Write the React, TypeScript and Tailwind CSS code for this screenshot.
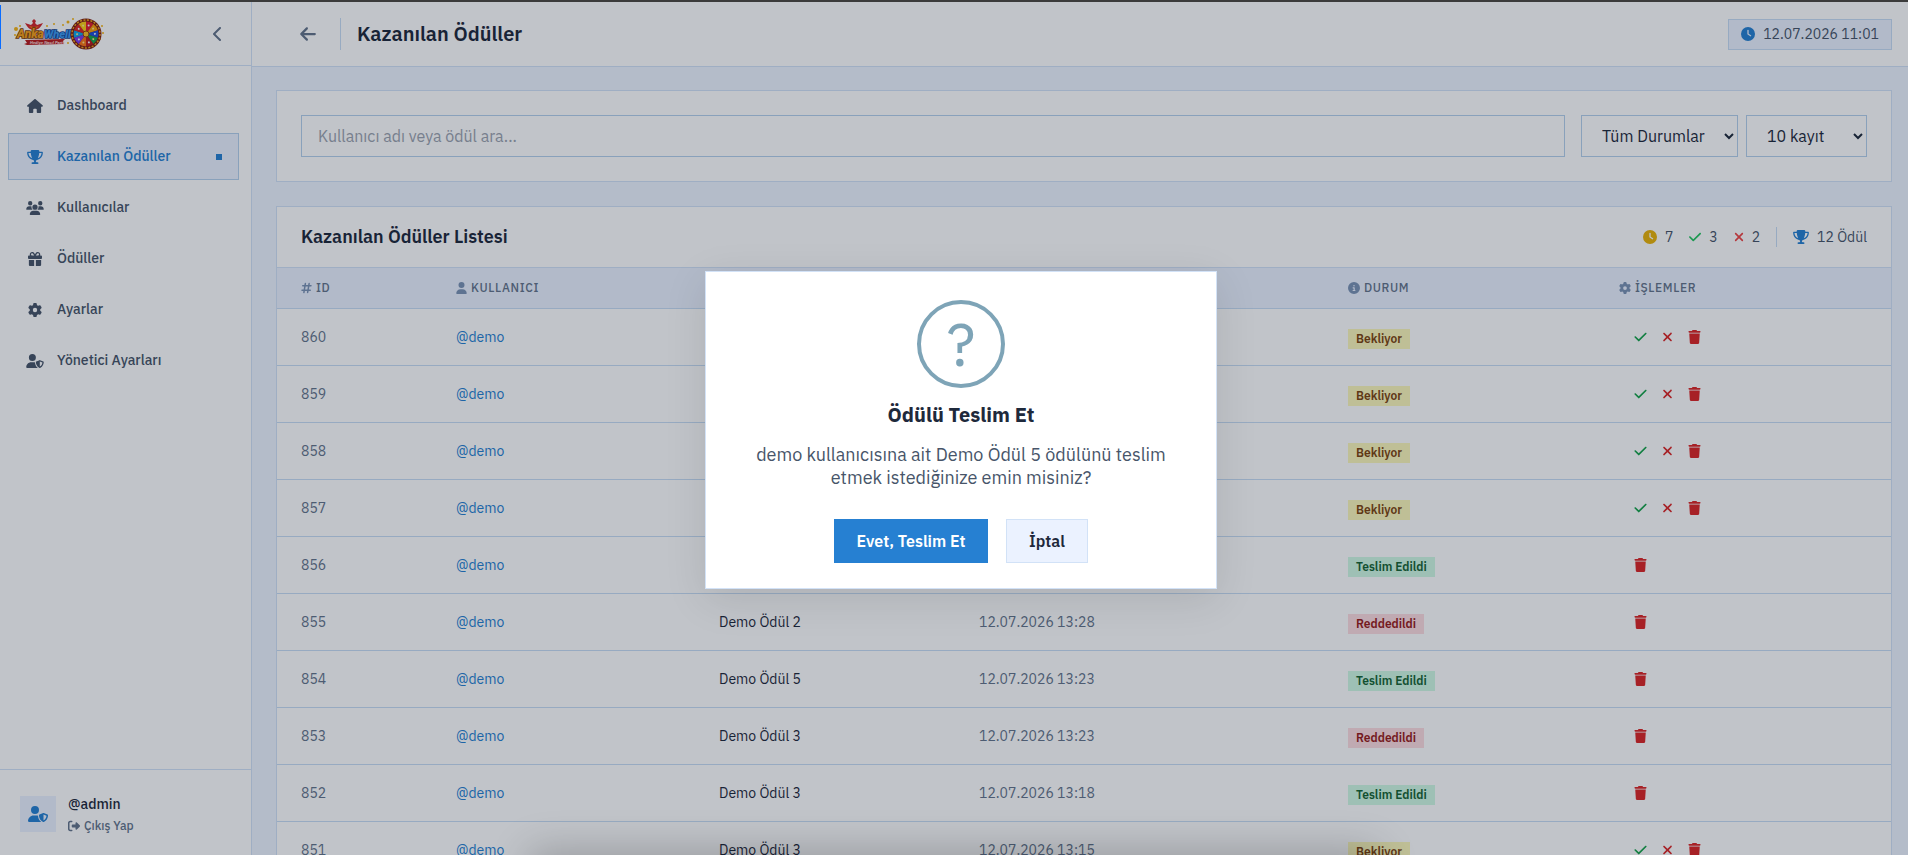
import type { ComponentType } from "react";
import {
    FaArrowLeft,
    FaCalendar,
    FaCheck,
    FaChevronLeft,
    FaCircleInfo,
    FaClock,
    FaGear,
    FaGift,
    FaHashtag,
    FaHouse,
    FaRightFromBracket,
    FaTrash,
    FaTrophy,
    FaUser,
    FaUserShield,
    FaUsers,
    FaXmark,
} from "react-icons/fa6";

type Icon = ComponentType<{ className?: string }>;
type Status = "pending" | "delivered" | "rejected";

const navItems: { label: string; icon: Icon; active?: boolean }[] = [
    { label: "Dashboard", icon: FaHouse },
    { label: "Kazanılan Ödüller", icon: FaTrophy, active: true },
    { label: "Kullanıcılar", icon: FaUsers },
    { label: "Ödüller", icon: FaGift },
    { label: "Ayarlar", icon: FaGear },
    { label: "Yönetici Ayarları", icon: FaUserShield },
];

const columns: { label: string; icon: Icon; iconSize: string; width: string }[] = [
    { label: "ID", icon: FaHashtag, iconSize: "h-3 w-[11px]", width: "w-[155px]" },
    { label: "KULLANICI", icon: FaUser, iconSize: "h-3 w-[11px]", width: "w-[263px]" },
    { label: "ÖDÜL", icon: FaGift, iconSize: "size-3", width: "w-[260px]" },
    { label: "TARİH", icon: FaCalendar, iconSize: "h-3 w-[11px]", width: "w-[369px]" },
    { label: "DURUM", icon: FaCircleInfo, iconSize: "size-3", width: "w-[271px]" },
    { label: "İŞLEMLER", icon: FaGear, iconSize: "size-3", width: "w-[296px]" },
];

const rows: { id: number; prize: string; date: string; status: Status }[] = [
    { id: 860, prize: "Demo Ödül 5", date: "12.07.2026 13:45", status: "pending" },
    { id: 859, prize: "Demo Ödül 1", date: "12.07.2026 13:42", status: "pending" },
    { id: 858, prize: "Demo Ödül 4", date: "12.07.2026 13:38", status: "pending" },
    { id: 857, prize: "Demo Ödül 3", date: "12.07.2026 13:34", status: "pending" },
    { id: 856, prize: "Demo Ödül 5", date: "12.07.2026 13:30", status: "delivered" },
    { id: 855, prize: "Demo Ödül 2", date: "12.07.2026 13:28", status: "rejected" },
    { id: 854, prize: "Demo Ödül 5", date: "12.07.2026 13:23", status: "delivered" },
    { id: 853, prize: "Demo Ödül 3", date: "12.07.2026 13:23", status: "rejected" },
    { id: 852, prize: "Demo Ödül 3", date: "12.07.2026 13:18", status: "delivered" },
    { id: 851, prize: "Demo Ödül 3", date: "12.07.2026 13:15", status: "pending" },
];

const badges: Record<Status, { label: string; style: string }> = {
    pending: { label: "Bekliyor", style: "bg-[#fdf8bb] text-[#7c450f]" },
    delivered: { label: "Teslim Edildi", style: "bg-[#d1fae5] text-[#166534]" },
    rejected: { label: "Reddedildi", style: "bg-[#fedde0] text-[#991b1b]" },
};

const wheelColors = ["#e11d2e", "#f59e0b", "#1d4ed8", "#16a34a", "#b91c1c", "#f97316", "#7c3aed", "#0ea5e9", "#dc2626", "#facc15"];

const Logo = () => (
    <svg viewBox="0 0 92 34" className="h-[34px] w-[92px]" role="img" aria-label="AnkaWhell">
        {/* Phoenix */}
        <path d="M21 13c-4 0-6-2-9-7 2 1 4 1 6 2l2-2-1-2 2-2 2 2-1 2 2 2c2-1 4-1 6-2-3 5-5 7-9 7z" fill="#d3262b" />
        <path d="M20 12c-2-1-3-2-4-3 2 0 3 1 5 1s4-1 5-1c-1 1-2 2-4 3z" fill="#f97316" />
        {/* Confetti */}
        <g fill="#f5b417">
            <circle cx="3" cy="12" r="2" />
            <circle cx="7" cy="9" r="1" />
            <circle cx="2" cy="18" r="1" />
            <circle cx="34" cy="9" r="1" />
            <circle cx="41" cy="7" r="1" />
            <circle cx="50" cy="8" r="1" />
            <circle cx="55" cy="5" r="1.5" />
            <circle cx="60" cy="2" r="1" />
            <circle cx="89" cy="9" r="1" />
            <circle cx="90" cy="16" r="1" />
            <circle cx="87" cy="22" r="1" />
            <circle cx="55" cy="26" r="1" />
        </g>
        <g fontFamily="Roboto, sans-serif" fontWeight="900" fontStyle="italic" strokeWidth="1.5" paintOrder="stroke">
            <text x="4" y="21" fontSize="12" fill="#f5a11a" stroke="#7a3b08">
                Anka
            </text>
            <text x="31" y="21" fontSize="11" fill="#3d9af0" stroke="#12418f">
                Whell
            </text>
        </g>
        {/* Ribbon */}
        <path d="M12 23l40-1-2 2 1 3-37 1-3-1 3-1z" fill="#b91c1c" />
        <text x="17" y="27" fontFamily="'Liberation Sans', sans-serif" fontStyle="italic" fontWeight="700" fontSize="4" fill="#fee2e2">
            Hediye Nasıl Party
        </text>
        {/* Wheel */}
        <circle cx="73" cy="17" r="15.5" fill="#7c1d12" />
        <circle cx="73" cy="17" r="14" fill="none" stroke="#f0a51c" strokeWidth="1.5" strokeDasharray="2 1.5" />
        {wheelColors.map((color, i) => (
            <path key={i} d="M73 17L73 4.5A12.5 12.5 0 0 1 80.35 6.89Z" fill={color} transform={`rotate(${i * 36} 73 17)`} />
        ))}
        {wheelColors.map((_, i) => (
            <circle key={i} cx="75.6" cy="8.5" r="1" fill={i % 2 ? "#fde68a" : "#f8fafc"} transform={`rotate(${i * 36} 73 17)`} />
        ))}
        <circle cx="73" cy="17" r="3" fill="#fbbf24" stroke="#92400e" strokeWidth="1" />
    </svg>
);

const Sidebar = () => (
    <aside className="flex w-[252px] shrink-0 flex-col border-r border-[#d2e2f7] bg-white">
        <div className="flex h-16 items-center justify-between border-b border-[#d2e2f7] pr-7 pl-[13px]">
            <Logo />
            <button type="button" aria-label="Menüyü daralt" className="text-[#64748b]">
                <FaChevronLeft className="h-4 w-2.5" />
            </button>
        </div>

        <nav className="flex flex-1 flex-col gap-1 py-4 pr-3 pl-2">
            {navItems.map(({ label, icon: NavIcon, active }) => (
                <a
                    key={label}
                    href="#"
                    className={`flex items-center gap-3 border px-4 py-3 text-sm leading-[21px] font-medium ${
                        active ? "border-[#b5d0ed] bg-[#ebf2ff] text-[#2680d2]" : "border-transparent text-[#475569]"
                    }`}
                >
                    <NavIcon className="h-3.5 w-5" />
                    <span className="flex-1">{label}</span>
                    {active && <span className="size-1.5 bg-[#2680d2]" />}
                </a>
            ))}
        </nav>

        <div className="flex items-center gap-3 border-t border-[#d2e2f7] px-5 pt-[22px] pb-[21px]">
            <div className="flex size-9 items-center justify-center bg-[#ebf2ff] text-[#2680d2]">
                <FaUserShield className="h-4 w-5" />
            </div>
            <div>
                <p className="text-sm leading-6 font-medium text-[#1e293b]">@admin</p>
                <button type="button" className="flex items-center gap-1 text-xs leading-5 font-medium text-[#64748b]">
                    <FaRightFromBracket className="size-3" />
                    Çıkış Yap
                </button>
            </div>
        </div>
    </aside>
);

const Header = () => (
    <header className="flex h-[65px] shrink-0 items-center justify-between border-b border-[#d2e2f7] bg-white pr-4 pl-10">
        <div className="flex items-center gap-4">
            <button type="button" aria-label="Geri" className="p-2 text-[#64748b]">
                <FaArrowLeft className="h-[18px] w-4" />
            </button>
            <div className="h-8 w-px bg-[#c7dcf5]" />
            <h1 className="text-xl font-semibold text-[#1e293b]">Kazanılan Ödüller</h1>
        </div>
        <div className="flex items-center gap-2 border border-[#c7dcf5] bg-[#ebf2ff] px-3 py-1 text-sm leading-[21px] text-[#475569]">
            <FaClock className="size-3.5 text-[#2680d2]" />
            12.07.2026 11:01
        </div>
    </header>
);

const Filters = () => (
    <section className="flex gap-4 border border-[#d2e2f7] bg-white p-6">
        <input
            type="text"
            aria-label="Ara"
            placeholder="Kullanıcı adı veya ödül ara..."
            className="h-[42px] min-w-0 flex-1 border border-[#b5d0ed] bg-white px-4 text-base text-[#1e293b] placeholder:text-[#9ca3af]"
        />
        <div className="flex gap-2">
            <select aria-label="Durum" className="h-[42px] w-[157px] border border-[#b5d0ed] bg-white px-4 text-base text-[#1e293b]">
                <option>Tüm Durumlar</option>
                <option>Bekliyor</option>
                <option>Teslim Edildi</option>
                <option>Reddedildi</option>
            </select>
            <select aria-label="Kayıt sayısı" className="h-[42px] w-[121px] border border-[#b5d0ed] bg-white px-4 text-base text-[#1e293b]">
                <option>10 kayıt</option>
                <option>25 kayıt</option>
                <option>50 kayıt</option>
            </select>
        </div>
    </section>
);

const PrizeList = () => (
    <section className="border border-[#d2e2f7] bg-white">
        <div className="flex h-[61px] items-center justify-between border-b border-[#d2e2f7] px-6">
            <h2 className="text-lg font-semibold text-[#1e293b]">Kazanılan Ödüller Listesi</h2>
            <div className="flex items-center gap-4 text-sm text-[#475569]">
                <span className="flex items-center gap-2">
                    <FaClock className="size-3.5 text-[#eab308]" />7
                </span>
                <span className="flex items-center gap-2">
                    <FaCheck className="h-3.5 w-3 text-[#22c55e]" />3
                </span>
                <span className="flex items-center gap-2">
                    <FaXmark className="h-3.5 w-2.5 text-[#ef4444]" />2
                </span>
                <span className="h-5 w-px bg-[#c7dcf5]" />
                <span className="flex items-center gap-2">
                    <FaTrophy className="h-3.5 w-4 text-[#2680d2]" />
                    12 Ödül
                </span>
            </div>
        </div>

        <table className="w-full table-fixed text-left text-sm">
            <thead>
                <tr className="h-10 border-b border-[#c7dcf5] bg-[#ebf2ff]">
                    {columns.map(({ label, icon: ColumnIcon, iconSize, width }) => (
                        <th key={label} className={`px-6 text-xs font-medium tracking-wider text-[#64748b] ${width}`}>
                            <span className="flex items-center gap-1">
                                <ColumnIcon className={`${iconSize} text-[#7b93b5]`} />
                                {label}
                            </span>
                        </th>
                    ))}
                </tr>
            </thead>
            <tbody>
                {rows.map(({ id, prize, date, status }) => (
                    <tr key={id} className="h-[57px] border-b border-[#c7dcf5]">
                        <td className="px-6 text-[#64748b]">{id}</td>
                        <td className="px-6">
                            <a href="#" className="text-[#2680d2]">
                                @demo
                            </a>
                        </td>
                        <td className="px-6 text-[#1e293b]">{prize}</td>
                        <td className="px-6 text-[#64748b]">{date}</td>
                        <td className="px-6 pt-1">
                            <span className={`inline-block px-2 text-xs leading-5 font-semibold ${badges[status].style}`}>{badges[status].label}</span>
                        </td>
                        <td className="px-6">
                            <div className="flex items-center gap-[15px] pl-[15px]">
                                {status === "pending" && (
                                    <>
                                        <button type="button" aria-label="Teslim Et" className="text-[#16a34a]">
                                            <FaCheck className="h-3.5 w-[13px]" />
                                        </button>
                                        <button type="button" aria-label="Reddet" className="text-[#dc2626]">
                                            <FaXmark className="h-3.5 w-[11px]" />
                                        </button>
                                    </>
                                )}
                                <button type="button" aria-label="Sil" className="text-[#dc2626]">
                                    <FaTrash className="h-3.5 w-[13px]" />
                                </button>
                            </div>
                        </td>
                    </tr>
                ))}
            </tbody>
        </table>
    </section>
);

const ConfirmDialog = () => (
    <div className="absolute inset-0 flex items-center justify-center bg-[#081428]/25 pt-px pl-3.5">
        <div
            role="dialog"
            aria-modal="true"
            aria-labelledby="confirm-title"
            className="flex w-lg flex-col items-center border border-[#d2e2f7] bg-white px-8 pt-7 pb-[25px] shadow-[0_10px_40px_rgba(0,0,0,0.1)]"
        >
            <div className="flex size-[88px] items-center justify-center rounded-full border-4 border-[#7ea4b7] text-6xl text-[#7ea4b7]">?</div>
            <h2 id="confirm-title" className="mt-[13px] text-xl leading-7 font-bold text-[#1e293b]">
                Ödülü Teslim Et
            </h2>
            <p className="mt-3.5 px-4 text-center text-lg leading-[23px] text-[#475569]">
                demo kullanıcısına ait Demo Ödül 5 ödülünü teslim etmek istediğinize emin misiniz?
            </p>
            <div className="mt-[30px] flex gap-[18px] text-base font-semibold">
                <button type="button" className="h-11 w-[154px] bg-[#2680d2] text-white">
                    Evet, Teslim Et
                </button>
                <button type="button" className="h-11 w-[82px] border border-[#d2e2f7] bg-[#ebf2ff] text-[#1e293b]">
                    İptal
                </button>
            </div>
        </div>
    </div>
);

export default function App() {
    return (
        <div className="relative h-screen overflow-hidden bg-[#3b3b3b] pt-0.5 font-['IBM_Plex_Sans',Roboto,sans-serif]">
            <div className="relative flex h-screen bg-[#eef4ff]">
                <Sidebar />
                <div className="flex min-w-0 flex-1 flex-col">
                    <Header />
                    <main className="flex flex-1 flex-col gap-6 overflow-hidden pt-[23px] pr-4 pl-6">
                        <Filters />
                        <PrizeList />
                    </main>
                </div>
                <ConfirmDialog />
            </div>
            {/* Focus marker at the window edge and the shade along its bottom */}
            <div className="absolute top-[5px] left-0 h-11 w-px bg-[#0a6cff]" />
            <div className="pointer-events-none absolute inset-x-[28%] top-full h-10 shadow-[0_0_40px_4px_rgba(0,0,0,0.22)]" />
        </div>
    );
}
